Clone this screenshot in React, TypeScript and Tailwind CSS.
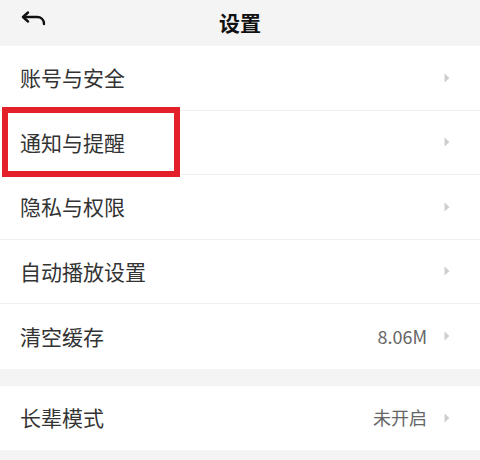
const ROWS = [
  { label: "账号与安全" },
  { label: "通知与提醒" },
  { label: "隐私与权限" },
  { label: "自动播放设置" },
  { label: "清空缓存", value: "8.06M" },
];

function Chevron() {
  return (
    <svg width="6" height="10" viewBox="0 0 6 10" className="shrink-0">
      <path d="M0.5 0.5 L5.5 5 L0.5 9.5 Z" fill="#cfcfcf" />
    </svg>
  );
}

function Row({ label, value, last }: { label: string; value?: string; last?: boolean }) {
  return (
    <div
      className={`flex h-[64.5px] items-center bg-white pl-5 pr-[30px] ${
        last ? "" : "border-b border-[#f0f0f0]"
      }`}
    >
      <span className="flex-1 text-[21px] text-[#333]">{label}</span>
      {value && <span className="mr-[17px] text-[18px] text-[#666]">{value}</span>}
      <Chevron />
    </div>
  );
}

export default function App() {
  return (
    <div
      className="relative h-[460px] w-[480px] overflow-hidden bg-[#f4f4f4]"
      style={{ fontFamily: '"Noto Sans CJK SC", "Noto Sans", sans-serif' }}
    >
      <header className="relative flex h-[46px] items-center justify-center">
        <svg
          width="26"
          height="16"
          viewBox="0 0 26 16"
          className="absolute left-[21px] top-[11px]"
          fill="none"
          stroke="#111"
          strokeWidth="2.4"
          strokeLinecap="round"
          strokeLinejoin="round"
        >
          <path d="M7 1.5 L2 6 L7 10.5" />
          <path d="M2.5 6 H16 C20 6 23 8.5 23 13" />
        </svg>
        <h1 className="text-[21px] font-bold text-[#111]">设置</h1>
      </header>

      <div>
        {ROWS.map((r, i) => (
          <Row key={r.label} label={r.label} value={r.value} last={i === ROWS.length - 1} />
        ))}
      </div>

      <div className="mt-[17px]">
        <div className="flex h-[64px] items-center bg-white pl-5 pr-[30px]">
          <span className="flex-1 text-[21px] text-[#333]">长辈模式</span>
          <span className="mr-[17px] text-[18px] text-[#666]">未开启</span>
          <Chevron />
        </div>
      </div>

      <div className="absolute left-[2px] top-[107px] h-[70px] w-[178px] border-[6px] border-[#e3202a]" />
    </div>
  );
}
